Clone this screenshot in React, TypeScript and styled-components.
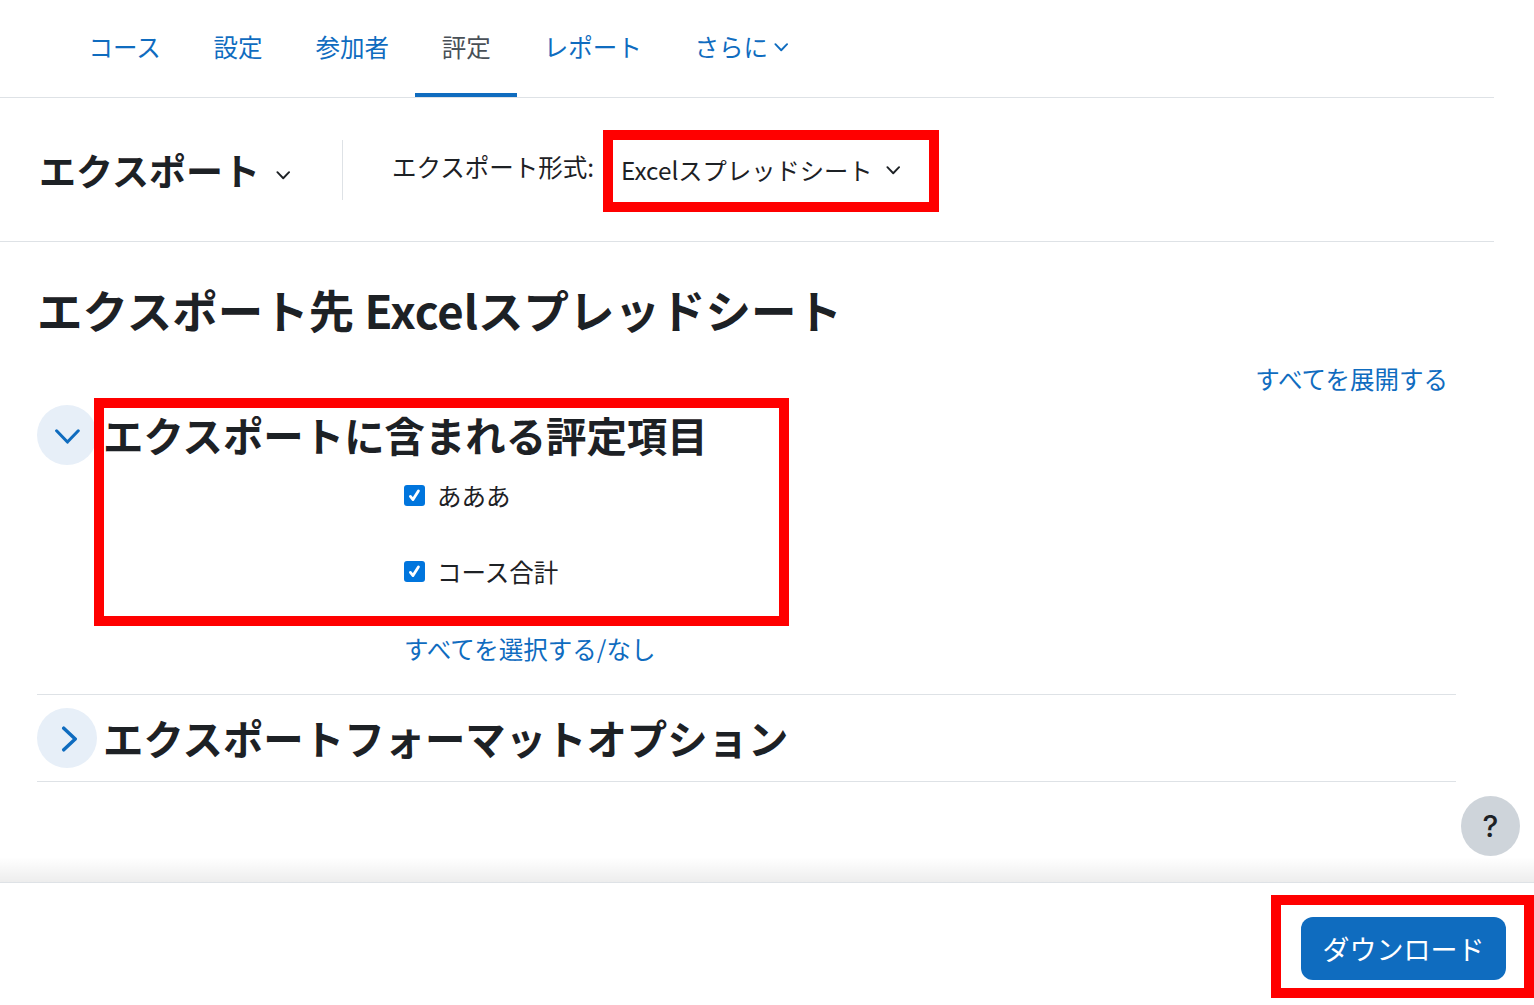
import React from "react";
import styled, { createGlobalStyle } from "styled-components";

const Global = createGlobalStyle`
  html, body { margin: 0; padding: 0; background: #fff; }
  body { font-family: "Noto Sans CJK JP", "Noto Sans", sans-serif; color: #1d2125; overflow: hidden; }
  * { box-sizing: border-box; }
`;

const Page = styled.div`
  position: relative;
  width: 1534px;
  height: 1005px;
  display: flex;
  flex-direction: column;
  overflow: hidden;
`;
const Main = styled.div`
  flex: 1;
  width: 1494px;
`;
const Nav = styled.nav`
  height: 98px;
  display: flex;
  padding-left: 62px;
  border-bottom: 1px solid #dee2e6;
`;
const NavItem = styled.a<{ $active?: boolean }>`
  height: 97px;
  padding: 0 26.45px;
  display: flex;
  align-items: center;
  gap: 6px;
  font-size: 24.5px;
  line-height: 36px;
  color: ${(p) => (p.$active ? "#495057" : "#0f6cbf")};
  border-bottom: 4px solid ${(p) => (p.$active ? "#0f6cbf" : "transparent")};
`;
const ActionBar = styled.div`
  height: 144px;
  display: flex;
  align-items: center;
  padding-left: 39px;
  padding-top: 1px;
  border-bottom: 1px solid #dee2e6;
`;
const BarTitle = styled.div`
  width: 304px;
  height: 60px;
  display: flex;
  align-items: center;
  gap: 16px;
  font-size: 37px;
  font-weight: 700;
  line-height: 56px;
  border-right: 1px solid #dee2e6;
  svg { margin-top: 10px; }
`;
const FormatLabel = styled.span`
  margin-left: 49px;
  font-size: 24.5px;
  line-height: 50px;
  margin-top: -6px;
  width: 229px;
  white-space: nowrap;
`;
const SelectBox = styled.div`
  display: flex;
  align-items: center;
  gap: 13px;
  font-size: 24.3px;
  line-height: 50px;
  white-space: nowrap;
`;
const Content = styled.div`
  padding: 0 38px 0 37px;
`;
const PageTitle = styled.h2`
  margin: 34px 0 0;
  font-size: 45.5px;
  font-weight: 700;
  line-height: 66px;
  white-space: nowrap;
`;
const ExpandRow = styled.div`
  display: flex;
  justify-content: flex-end;
  padding-right: 8px;
  margin-top: 19px;
  height: 36px;
`;
const TextLink = styled.a`
  font-size: 24.5px;
  line-height: 36px;
  color: #0f6cbf;
  white-space: nowrap;
`;
const SectionHead = styled.div`
  display: flex;
  align-items: center;
  gap: 6px;
  height: 60px;
`;
const Toggle = styled.div`
  width: 60px;
  height: 60px;
  border-radius: 50%;
  background: #e7eff8;
  display: flex;
  align-items: center;
  justify-content: center;
  flex: none;
  svg { margin-top: 1px; }
`;
const SectionTitle = styled.h3`
  margin: 0;
  font-size: 40.4px;
  font-weight: 700;
  line-height: 60px;
  white-space: nowrap;
`;
const SectionOne = styled.section`
  margin-top: 8px;
  height: 290px;
  border-bottom: 1px solid #dee2e6;
`;
const SectionTwo = styled.section`
  height: 87px;
  padding-top: 13px;
  border-bottom: 1px solid #dee2e6;
`;
const Checks = styled.div`
  display: flex;
  flex-direction: column;
  gap: 40px;
  padding: 13px 0 0 367px;
`;
const CheckRow = styled.label`
  display: flex;
  align-items: center;
  gap: 14px;
  height: 36px;
  font-size: 24.5px;
  line-height: 36px;
`;
const CheckMark = styled.span`
  width: 21px;
  height: 21px;
  margin-right: -2px;
  margin-top: -1px;
  border-radius: 3px;
  background: #0075dd;
  display: flex;
  align-items: center;
  justify-content: center;
  flex: none;
`;
const SelectAll = styled.div`
  padding: 41px 0 0 367px;
`;
const Footer = styled.footer`
  height: 123px;
  flex: none;
  position: relative;
  background: #fff;
  border-top: 1px solid #dee2e6;
  display: flex;
  justify-content: flex-end;
  padding: 34px 28px 0 0;
  &::before {
    content: "";
    position: absolute;
    left: 0;
    right: 0;
    top: -26px;
    height: 25px;
    background: linear-gradient(to bottom, rgba(0, 0, 0, 0), rgba(0, 0, 0, 0.07));
  }
`;
const DownloadButton = styled.button`
  width: 205px;
  height: 63px;
  border: none;
  border-radius: 12px;
  background: #0f6cbf;
  color: #fff;
  font-family: inherit;
  font-size: 27px;
  line-height: 40px;
  padding: 0;
`;
const HelpButton = styled.div`
  position: absolute;
  left: 1461px;
  top: 796px;
  width: 59px;
  height: 60px;
  border-radius: 50%;
  background: #ced4da;
  display: flex;
  align-items: center;
  justify-content: center;
  font-family: "Inter", sans-serif;
  font-size: 30px;
  font-weight: 500;
  color: #1d2125;
`;
const Callout = styled.div<{ $l: number; $t: number; $w: number; $h: number }>`
  position: absolute;
  left: ${(p) => p.$l}px;
  top: ${(p) => p.$t}px;
  width: ${(p) => p.$w}px;
  height: ${(p) => p.$h}px;
  border: 10px solid #ff0000;
  pointer-events: none;
`;

const Chevron = ({ size = 12, color = "#1d2125", width = 1.6, dir = "down" }: { size?: number; color?: string; width?: number; dir?: "down" | "right" }) => (
  <svg width={size} height={size} viewBox="0 0 12 12" fill="none" stroke={color} strokeWidth={width} strokeLinecap="round" strokeLinejoin="round">
    <path d={dir === "down" ? "M1.2 3.6 6.2 8.8l5-5.2" : "M4.5 1 9.8 6l-5.3 5"} />
  </svg>
);

const Tick = () => (
  <svg width="15" height="15" viewBox="0 0 15 15" fill="none" stroke="#fff" strokeWidth="2.8" strokeLinecap="round" strokeLinejoin="round">
    <path d="M3.4 8.4l2.6 3.2L11.4 3" />
  </svg>
);

export default function App() {
  return (
    <Page>
      <Global />
      <Main>
        <Nav>
          <NavItem>コース</NavItem>
          <NavItem>設定</NavItem>
          <NavItem>参加者</NavItem>
          <NavItem $active>評定</NavItem>
          <NavItem>レポート</NavItem>
          <NavItem>
            さらに
            <Chevron size={14} color="#0f6cbf" />
          </NavItem>
        </Nav>
        <ActionBar>
          <BarTitle>
            エクスポート
            <Chevron size={14} />
          </BarTitle>
          <FormatLabel>エクスポート形式:</FormatLabel>
          <SelectBox>
            Excelスプレッドシート
            <Chevron size={14} />
          </SelectBox>
        </ActionBar>
        <Content>
          <PageTitle>エクスポート先 Excelスプレッドシート</PageTitle>
          <ExpandRow>
            <TextLink>すべてを展開する</TextLink>
          </ExpandRow>
          <SectionOne>
            <SectionHead>
              <Toggle>
                <Chevron size={26} color="#0f6cbf" width={1.4} />
              </Toggle>
              <SectionTitle>エクスポートに含まれる評定項目</SectionTitle>
            </SectionHead>
            <Checks>
              <CheckRow>
                <CheckMark><Tick /></CheckMark>
                あああ
              </CheckRow>
              <CheckRow>
                <CheckMark><Tick /></CheckMark>
                コース合計
              </CheckRow>
            </Checks>
            <SelectAll>
              <TextLink>すべてを選択する/なし</TextLink>
            </SelectAll>
          </SectionOne>
          <SectionTwo>
            <SectionHead>
              <Toggle>
                <Chevron size={26} color="#0f6cbf" width={1.6} dir="right" />
              </Toggle>
              <SectionTitle>エクスポートフォーマットオプション</SectionTitle>
            </SectionHead>
          </SectionTwo>
        </Content>
      </Main>
      <Footer>
        <DownloadButton>ダウンロード</DownloadButton>
      </Footer>
      <HelpButton>?</HelpButton>
      <Callout $l={603} $t={130} $w={336} $h={82} />
      <Callout $l={94} $t={398} $w={695} $h={228} />
      <Callout $l={1271} $t={895} $w={263} $h={103} />
    </Page>
  );
}
